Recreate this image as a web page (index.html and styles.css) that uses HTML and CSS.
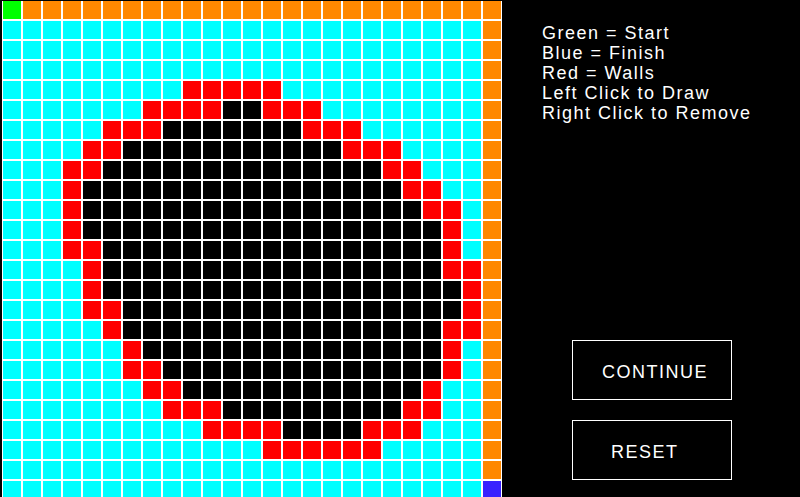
FILE: index.html
```html
<!DOCTYPE html>
<html lang="en">
<head>
<meta charset="utf-8">
<title>Path Finder</title>
<link rel="stylesheet" href="styles.css">
</head>
<body>
<div class="app">
  <div class="grid" id="grid"></div>
  <div class="panel">
    <div class="legend">
      <div>Green = Start</div>
      <div>Blue = Finish</div>
      <div>Red = Walls</div>
      <div>Left Click to Draw</div>
      <div>Right Click to Remove</div>
    </div>
    <div class="buttons">
      <div class="btn btn-continue">CONTINUE</div>
      <div class="btn btn-reset">RESET</div>
    </div>
  </div>
</div>
<script src="grid.js"></script>
</body>
</html>
```

FILE: styles.css
```css
html, body {
  margin: 0;
  padding: 0;
  background: #000;
  overflow: hidden;
}
body {
  font-family: "Liberation Sans", Arial, sans-serif;
  color: #fff;
}
.app {
  display: flex;
  align-items: flex-start;
  height: 497px;
}
.grid {
  margin: 1px 0 0 2px;
  padding: 0 1px;
  background: #fff;
  display: grid;
  grid-template-columns: repeat(25, 18px);
  grid-auto-rows: 18px;
  gap: 2px;
}
.cell { width: 18px; height: 18px; }
.c-S { background: #00ff00; }
.c-P { background: #ff8800; }
.c-C { background: #00ffff; }
.c-R { background: #ff0000; }
.c-K { background: #000000; }
.c-E { background: #3822ff; }

.panel {
  display: flex;
  flex-direction: column;
  padding-left: 40px;
}
.legend {
  margin-top: 23px;
  font-size: 18px;
  line-height: 20px;
  letter-spacing: 1.5px;
  white-space: nowrap;
}
.buttons {
  margin: 217px 0 0 30px;
  display: flex;
  flex-direction: column;
  gap: 20px;
}
.btn {
  width: 160px;
  height: 60px;
  box-sizing: border-box;
  border: 1px solid #fff;
  color: #fff;
  font-size: 18px;
  line-height: 20px;
  letter-spacing: 1.5px;
  padding-top: 21px;
  white-space: nowrap;
  cursor: pointer;
}
.btn-continue { padding-left: 29px; }
.btn-reset { padding-left: 38px; }
```

FILE: grid.js
```js
(function () {
  function r(s, n) { return s.repeat(n); }
  var rows = [
    "S" + r("P", 24),
    r("C", 24) + "P",
    r("C", 24) + "P",
    r("C", 24) + "P",
    r("C", 9) + r("R", 5) + r("C", 10) + "P",
    r("C", 7) + r("R", 4) + r("K", 2) + r("R", 3) + r("C", 8) + "P",
    r("C", 5) + r("R", 3) + r("K", 7) + r("R", 3) + r("C", 6) + "P",
    r("C", 4) + r("R", 2) + r("K", 11) + r("R", 3) + r("C", 4) + "P",
    r("C", 3) + r("R", 2) + r("K", 14) + r("R", 2) + r("C", 3) + "P",
    r("C", 3) + r("R", 1) + r("K", 16) + r("R", 2) + r("C", 2) + "P",
    r("C", 3) + r("R", 1) + r("K", 17) + r("R", 2) + r("C", 1) + "P",
    r("C", 3) + r("R", 1) + r("K", 18) + r("R", 1) + r("C", 1) + "P",
    r("C", 3) + r("R", 2) + r("K", 17) + r("R", 1) + r("C", 1) + "P",
    r("C", 4) + r("R", 1) + r("K", 17) + r("R", 2) + "P",
    r("C", 4) + r("R", 1) + r("K", 18) + r("R", 1) + "P",
    r("C", 4) + r("R", 2) + r("K", 17) + r("R", 1) + "P",
    r("C", 5) + r("R", 1) + r("K", 16) + r("R", 2) + "P",
    r("C", 6) + r("R", 1) + r("K", 15) + r("R", 1) + r("C", 1) + "P",
    r("C", 6) + r("R", 2) + r("K", 14) + r("R", 1) + r("C", 1) + "P",
    r("C", 7) + r("R", 2) + r("K", 12) + r("R", 1) + r("C", 2) + "P",
    r("C", 8) + r("R", 3) + r("K", 9) + r("R", 2) + r("C", 2) + "P",
    r("C", 10) + r("R", 4) + r("K", 4) + r("R", 3) + r("C", 3) + "P",
    r("C", 13) + r("R", 6) + r("C", 5) + "P",
    r("C", 24) + "P",
    r("C", 24) + "E"
  ];
  var grid = document.getElementById("grid");
  var frag = document.createDocumentFragment();
  rows.forEach(function (row) {
    for (var i = 0; i < row.length; i++) {
      var d = document.createElement("div");
      d.className = "cell c-" + row[i];
      frag.appendChild(d);
    }
  });
  grid.appendChild(frag);
})();
```
